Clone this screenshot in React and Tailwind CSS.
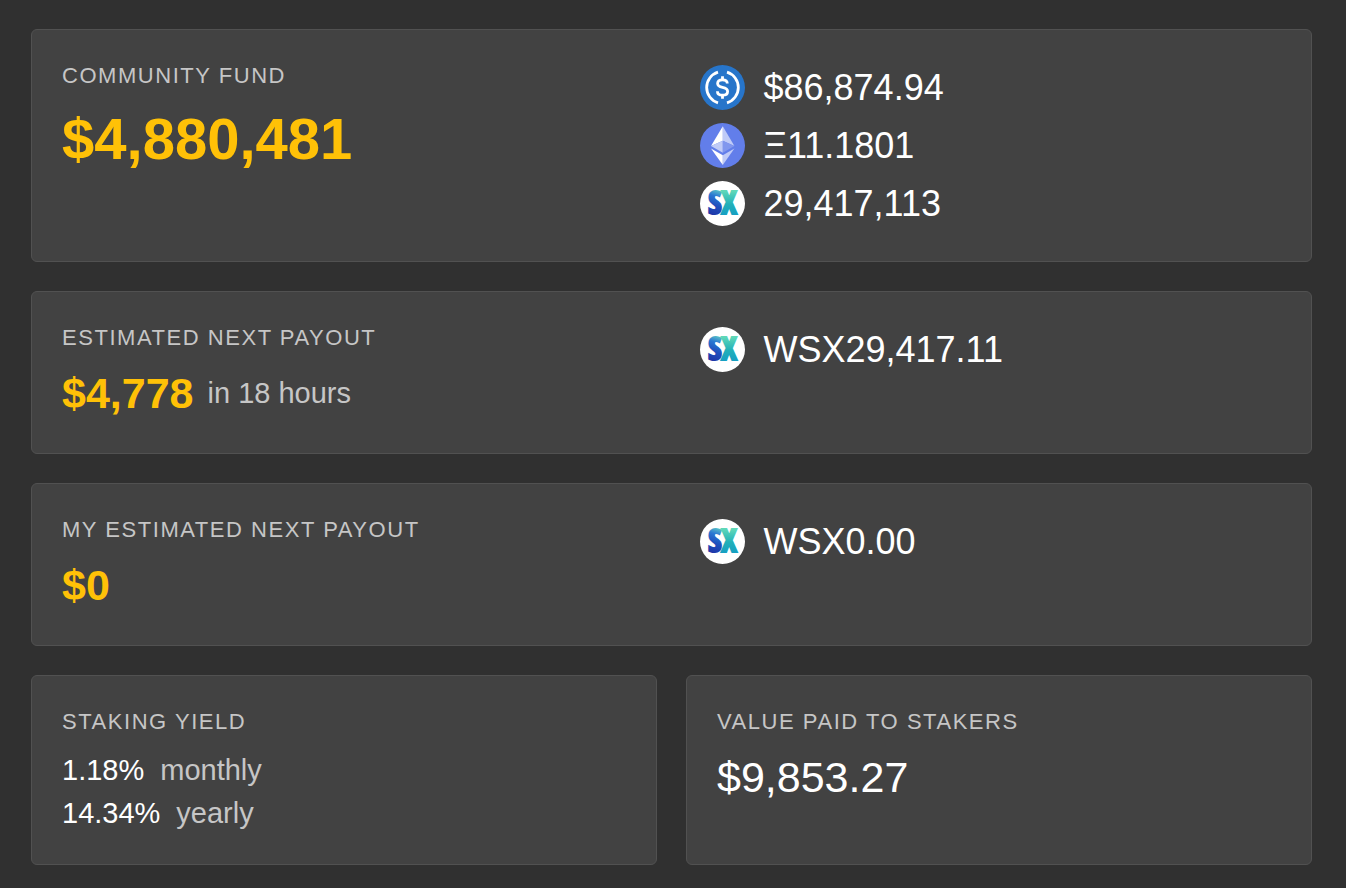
import React, { useId } from "react";

const UsdcIcon = () => (
  <svg viewBox="0 0 45 45" className="size-[45px] shrink-0" aria-hidden="true">
    <circle cx="22.5" cy="22.5" r="22.5" fill="#2775ca" />
    <g fill="none" stroke="#fff" strokeWidth="2.8">
      <path d="M18 7.2A16 16 0 0 0 18 37.8" />
      <path d="M27 7.2A16 16 0 0 1 27 37.8" />
      <path d="M27.3 18.6C27.3 16 25.3 14.8 22.5 14.8C19.6 14.8 17.6 16.2 17.6 18.6C17.6 21 19.4 21.8 22.5 22.4C25.8 23 27.6 23.9 27.6 26.4C27.6 28.8 25.6 30.2 22.5 30.2C19.4 30.2 17.4 28.8 17.4 26.2" />
      <path d="M22.5 11.2V15M22.5 30V33.8" />
    </g>
  </svg>
);

const EthIcon = () => (
  <svg viewBox="0 0 45 45" className="size-[45px] shrink-0" aria-hidden="true">
    <circle cx="22.5" cy="22.5" r="22.5" fill="#627eea" />
    <path d="M22.8 3.2L11 23L22.8 17.7Z" fill="#fff" />
    <path d="M22.8 3.2L34.4 23L22.8 17.7Z" fill="#c0cbf7" />
    <path d="M11 23L22.8 17.7V29.8Z" fill="#c0cbf7" />
    <path d="M34.4 23L22.8 17.7V29.8Z" fill="#8197ee" />
    <path d="M11 25.6L22.8 32.3V42Z" fill="#fff" />
    <path d="M34.4 25.6L22.8 32.3V42Z" fill="#c0cbf7" />
  </svg>
);

const SxIcon = () => {
  const id = useId();

  return (
    <svg viewBox="0 0 45 45" className="size-[45px] shrink-0" aria-hidden="true">
      <defs>
        <linearGradient
          id={`${id}-s`}
          gradientUnits="userSpaceOnUse"
          x1="12"
          y1="34"
          x2="20"
          y2="10"
        >
          <stop offset="0" stopColor="#1e36a8" />
          <stop offset="0.4" stopColor="#2050bd" />
          <stop offset="0.75" stopColor="#2a78d2" />
          <stop offset="1" stopColor="#58bfc8" />
        </linearGradient>
        <linearGradient
          id={`${id}-x`}
          gradientUnits="userSpaceOnUse"
          x1="30"
          y1="34"
          x2="30"
          y2="10"
        >
          <stop offset="0" stopColor="#169fc2" />
          <stop offset="0.45" stopColor="#22b0b8" />
          <stop offset="1" stopColor="#5fd8b8" />
        </linearGradient>
      </defs>
      <circle cx="22.5" cy="22.5" r="22.5" fill="#fff" />
      <text
        x="22.5"
        y="33.2"
        textAnchor="middle"
        fontFamily="'Liberation Sans Narrow', 'Open Sans Condensed', sans-serif"
        fontWeight="700"
        fontSize="32"
        strokeWidth="2.2"
      >
        <tspan fill={`url(#${id}-s)`} stroke={`url(#${id}-s)`}>
          S
        </tspan>
        <tspan fill={`url(#${id}-x)`} stroke={`url(#${id}-x)`}>
          X
        </tspan>
      </text>
    </svg>
  );
};

const icons = {
  usdc: UsdcIcon,
  eth: EthIcon,
  sx: SxIcon,
};

const fundTokens = [
  { icon: "usdc", amount: "$86,874.94" },
  { icon: "eth", amount: "Ξ11.1801" },
  { icon: "sx", amount: "29,417,113" },
];

const yields = [
  { rate: "1.18%", period: "monthly" },
  { rate: "14.34%", period: "yearly" },
];

const Card = ({ title, children, aside }) => (
  <section className="rounded-md border border-[#515151] bg-[#424242] p-[29px]">
    <div className={aside ? "grid grid-cols-2 gap-14" : ""}>
      <div className="pl-px">
        <h2 className="mb-2 text-[22px] leading-[33px] tracking-[0.07em] text-[#c6c6c6] uppercase">
          {title}
        </h2>
        {children}
      </div>
      {aside}
    </div>
  </section>
);

const TokenList = ({ tokens }) => (
  <ul className="flex flex-col gap-[13px] py-1.5">
    {tokens.map((token) => {
      const Icon = icons[token.icon];
      return (
        <li key={token.icon} className="flex items-center gap-[19px]">
          <Icon />
          <span className="text-[36px] leading-[45px]">{token.amount}</span>
        </li>
      );
    })}
  </ul>
);

const App = () => {
  return (
    <main className="flex min-h-screen flex-col gap-[29px] bg-[#303030] pt-[29px] pr-[34px] pb-[23px] pl-[31px] font-['Liberation_Sans',Arial,sans-serif] text-white">
      <Card title="Community Fund" aside={<TokenList tokens={fundTokens} />}>
        <p className="text-[58px] leading-[78px] font-bold text-[#ffc107]">
          $4,880,481
        </p>
      </Card>

      <Card
        title="Estimated Next Payout"
        aside={<TokenList tokens={[{ icon: "sx", amount: "WSX29,417.11" }]} />}
      >
        <p className="flex items-center gap-[14px] leading-[62px]">
          <span className="text-[43px] font-bold text-[#ffc107]">$4,778</span>
          <span className="text-[29px] text-[#c6c6c6]">in 18 hours</span>
        </p>
      </Card>

      <Card
        title="My Estimated Next Payout"
        aside={<TokenList tokens={[{ icon: "sx", amount: "WSX0.00" }]} />}
      >
        <p className="text-[43px] leading-[62px] font-bold text-[#ffc107]">$0</p>
      </Card>

      <div className="grid grid-cols-2 gap-[29px]">
        <Card title="Staking Yield">
          <ul className="pt-[3px] text-[29px] leading-[43px]">
            {yields.map((item) => (
              <li key={item.period} className="flex gap-4">
                <span>{item.rate}</span>
                <span className="text-[#c6c6c6]">{item.period}</span>
              </li>
            ))}
          </ul>
        </Card>
        <Card title="Value Paid to Stakers">
          <p className="text-[43px] leading-[62px]">$9,853.27</p>
        </Card>
      </div>
    </main>
  );
};

export default App;
